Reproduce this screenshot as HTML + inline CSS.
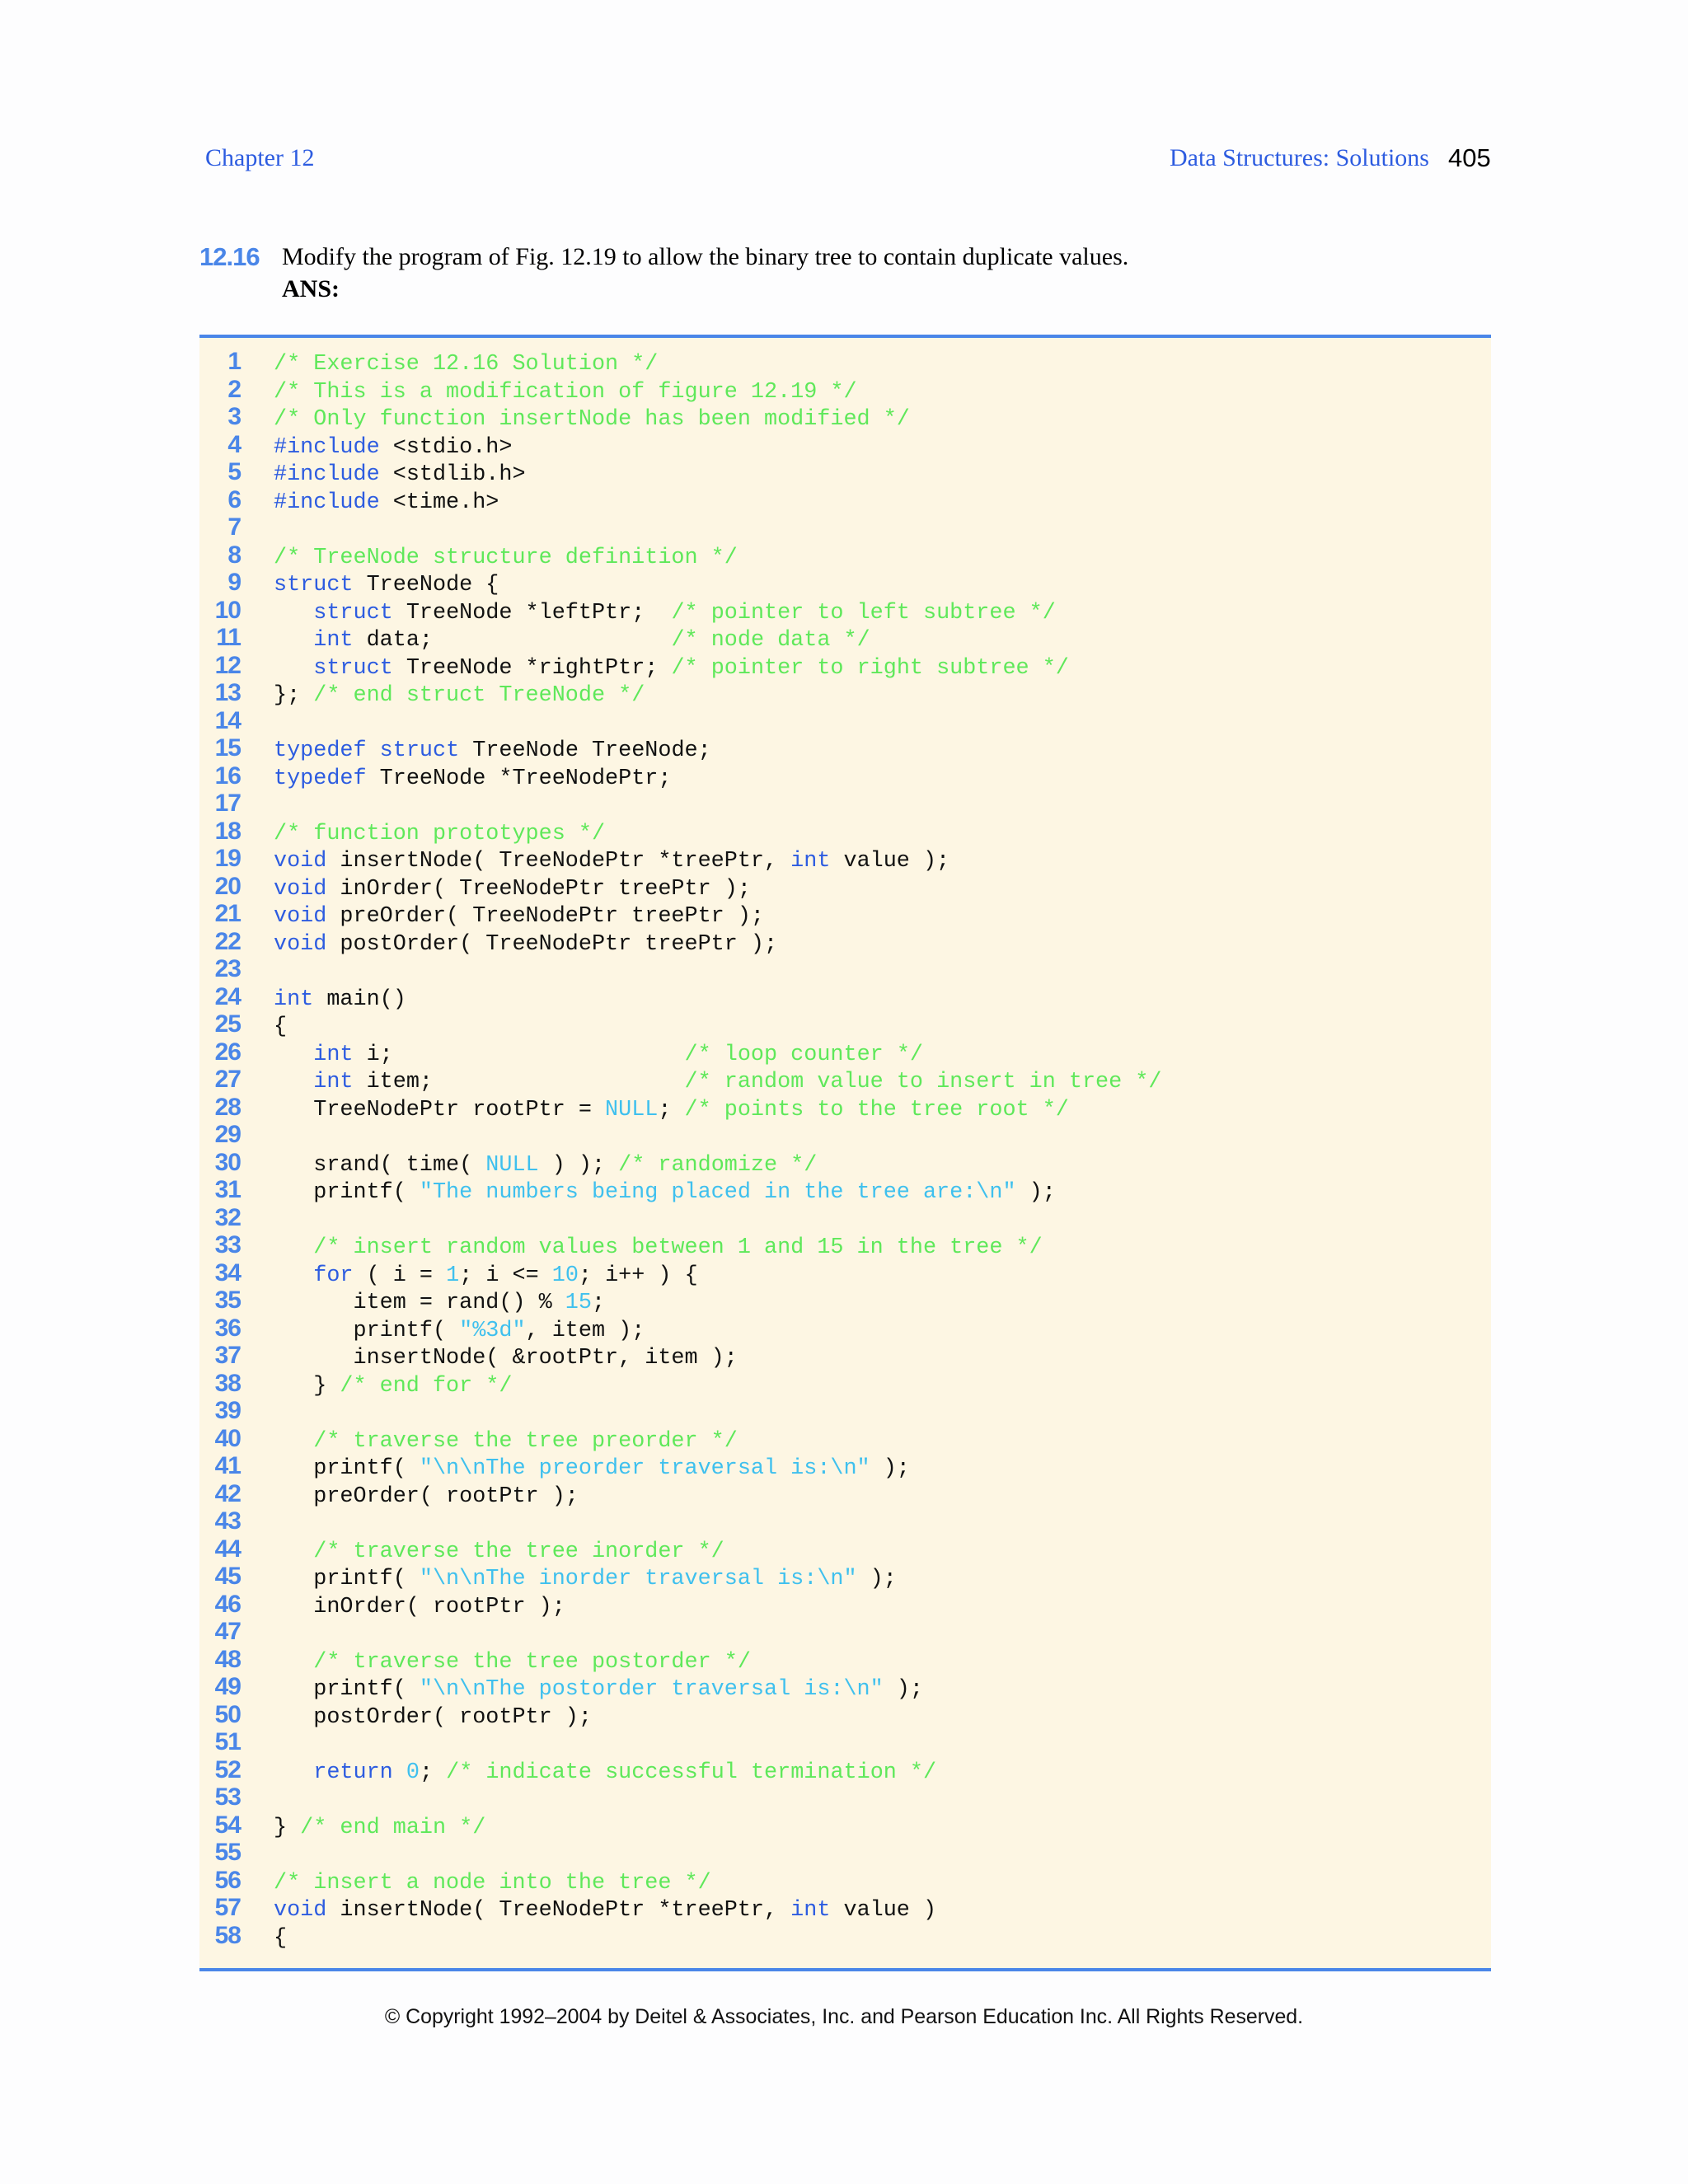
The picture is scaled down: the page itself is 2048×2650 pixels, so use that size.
<!DOCTYPE html>
<html><head><meta charset="utf-8"><style>
html,body{margin:0;padding:0;background:#fdfdfe;}
body{width:2048px;height:2650px;position:relative;overflow:hidden;}
.a{position:absolute;white-space:pre;}
.ser{font-family:"Liberation Serif",serif;}
.box{position:absolute;left:242px;top:406px;width:1567px;height:1986px;background:#fdf6e3;border-top:4px solid #4a86e8;border-bottom:4px solid #4a86e8;box-sizing:border-box;}
pre{margin:0;position:absolute;font-family:"Liberation Mono",monospace;font-size:26.8px;line-height:33.5px;color:#111;}
.nums{left:220px;width:72px;text-align:right;font-family:"Liberation Sans",sans-serif;font-weight:bold;color:#4a86e8;font-size:30px;letter-spacing:-1px;}
.c{color:#5fe85a}.k{color:#2d5ce0}.s{color:#3fc0ee}
</style></head><body>
<div class="a ser" style="left:249px;top:175px;font-size:30px;color:#2d5ce0;">Chapter 12</div>
<div class="a ser" style="left:1419px;top:175px;font-size:30px;color:#2d5ce0;">Data Structures: Solutions</div>
<div class="a" style="left:1757px;top:174px;font-size:31px;font-family:'Liberation Sans',sans-serif;color:#000;">405</div>
<div class="a" style="left:242px;top:294px;font-size:31px;font-family:'Liberation Sans',sans-serif;font-weight:bold;color:#4a86e8;letter-spacing:-1px;">12.16</div>
<div class="a ser" style="left:342px;top:295px;font-size:30px;color:#000;">Modify the program of Fig. 12.19 to allow the binary tree to contain duplicate values.</div>
<div class="a ser" style="left:342px;top:334px;font-size:30px;font-weight:bold;color:#000;">ANS:</div>
<div class="box"></div>
<pre class="nums" style="top:422px;">1
2
3
4
5
6
7
8
9
10
11
12
13
14
15
16
17
18
19
20
21
22
23
24
25
26
27
28
29
30
31
32
33
34
35
36
37
38
39
40
41
42
43
44
45
46
47
48
49
50
51
52
53
54
55
56
57
58</pre>
<pre style="left:332px;top:426px;"><span class="c">/* Exercise 12.16 Solution */</span>
<span class="c">/* This is a modification of figure 12.19 */</span>
<span class="c">/* Only function insertNode has been modified */</span>
<span class="k">#include</span> &lt;stdio.h&gt;
<span class="k">#include</span> &lt;stdlib.h&gt;
<span class="k">#include</span> &lt;time.h&gt;

<span class="c">/* TreeNode structure definition */</span>
<span class="k">struct</span> TreeNode {
   <span class="k">struct</span> TreeNode *leftPtr;  <span class="c">/* pointer to left subtree */</span>
   <span class="k">int</span> data;                  <span class="c">/* node data */</span>
   <span class="k">struct</span> TreeNode *rightPtr; <span class="c">/* pointer to right subtree */</span>
}; <span class="c">/* end struct TreeNode */</span>

<span class="k">typedef</span> <span class="k">struct</span> TreeNode TreeNode;
<span class="k">typedef</span> TreeNode *TreeNodePtr;

<span class="c">/* function prototypes */</span>
<span class="k">void</span> insertNode( TreeNodePtr *treePtr, <span class="k">int</span> value );
<span class="k">void</span> inOrder( TreeNodePtr treePtr );
<span class="k">void</span> preOrder( TreeNodePtr treePtr );
<span class="k">void</span> postOrder( TreeNodePtr treePtr );

<span class="k">int</span> main()
{
   <span class="k">int</span> i;                      <span class="c">/* loop counter */</span>
   <span class="k">int</span> item;                   <span class="c">/* random value to insert in tree */</span>
   TreeNodePtr rootPtr = <span class="s">NULL</span>; <span class="c">/* points to the tree root */</span>

   srand( time( <span class="s">NULL</span> ) ); <span class="c">/* randomize */</span>
   printf( <span class="s">"The numbers being placed in the tree are:\n"</span> );

   <span class="c">/* insert random values between 1 and 15 in the tree */</span>
   <span class="k">for</span> ( i = <span class="s">1</span>; i &lt;= <span class="s">10</span>; i++ ) {
      item = rand() % <span class="s">15</span>;
      printf( <span class="s">"%3d"</span>, item );
      insertNode( &amp;rootPtr, item );
   } <span class="c">/* end for */</span>

   <span class="c">/* traverse the tree preorder */</span>
   printf( <span class="s">"\n\nThe preorder traversal is:\n"</span> );
   preOrder( rootPtr );

   <span class="c">/* traverse the tree inorder */</span>
   printf( <span class="s">"\n\nThe inorder traversal is:\n"</span> );
   inOrder( rootPtr );

   <span class="c">/* traverse the tree postorder */</span>
   printf( <span class="s">"\n\nThe postorder traversal is:\n"</span> );
   postOrder( rootPtr );

   <span class="k">return</span> <span class="s">0</span>; <span class="c">/* indicate successful termination */</span>

} <span class="c">/* end main */</span>

<span class="c">/* insert a node into the tree */</span>
<span class="k">void</span> insertNode( TreeNodePtr *treePtr, <span class="k">int</span> value )
{</pre>
<div class="a" style="left:0;width:2048px;text-align:center;top:2433px;font-size:24.9px;font-family:'Liberation Sans',sans-serif;color:#111;">© Copyright 1992–2004 by Deitel &amp; Associates, Inc. and Pearson Education Inc. All Rights Reserved.</div>
</body></html>
